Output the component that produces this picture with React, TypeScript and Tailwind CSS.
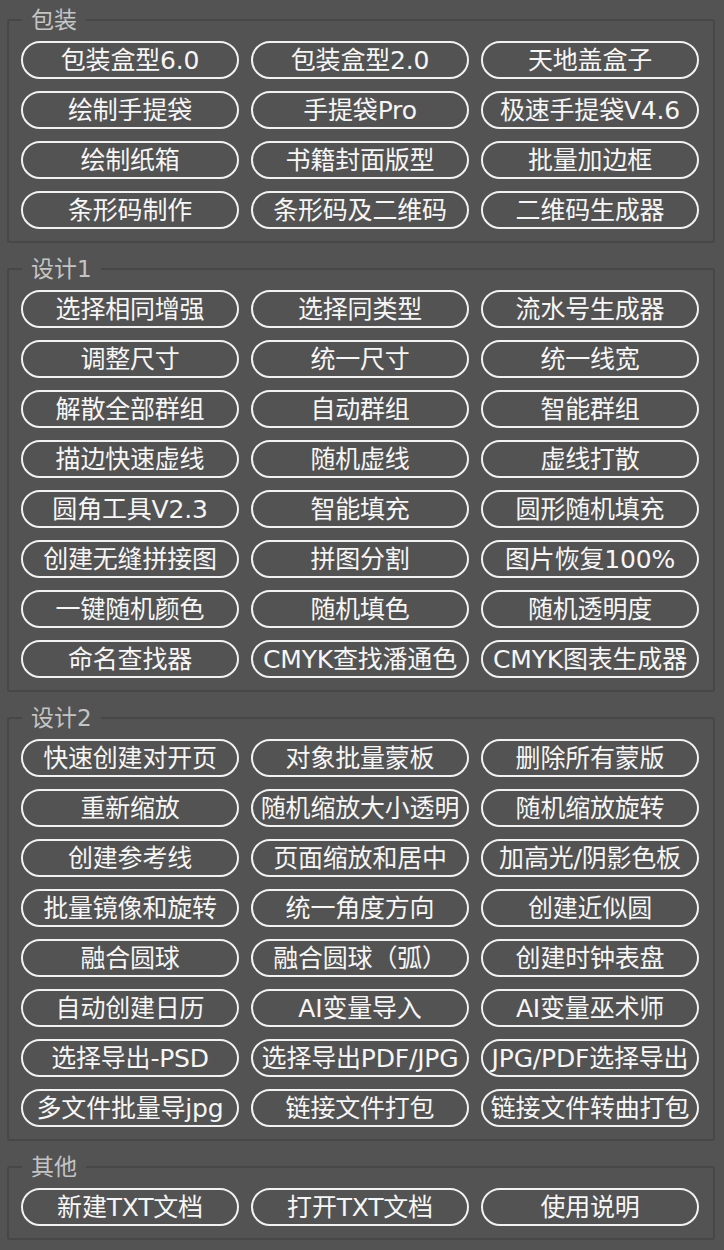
const groups: { title: string; items: string[] }[] = [
  {
    title: "包装",
    items: [
      "包装盒型6.0", "包装盒型2.0", "天地盖盒子",
      "绘制手提袋", "手提袋Pro", "极速手提袋V4.6",
      "绘制纸箱", "书籍封面版型", "批量加边框",
      "条形码制作", "条形码及二维码", "二维码生成器",
    ],
  },
  {
    title: "设计1",
    items: [
      "选择相同增强", "选择同类型", "流水号生成器",
      "调整尺寸", "统一尺寸", "统一线宽",
      "解散全部群组", "自动群组", "智能群组",
      "描边快速虚线", "随机虚线", "虚线打散",
      "圆角工具V2.3", "智能填充", "圆形随机填充",
      "创建无缝拼接图", "拼图分割", "图片恢复100%",
      "一键随机颜色", "随机填色", "随机透明度",
      "命名查找器", "CMYK查找潘通色", "CMYK图表生成器",
    ],
  },
  {
    title: "设计2",
    items: [
      "快速创建对开页", "对象批量蒙板", "删除所有蒙版",
      "重新缩放", "随机缩放大小透明", "随机缩放旋转",
      "创建参考线", "页面缩放和居中", "加高光/阴影色板",
      "批量镜像和旋转", "统一角度方向", "创建近似圆",
      "融合圆球", "融合圆球（弧）", "创建时钟表盘",
      "自动创建日历", "AI变量导入", "AI变量巫术师",
      "选择导出-PSD", "选择导出PDF/JPG", "JPG/PDF选择导出",
      "多文件批量导jpg", "链接文件打包", "链接文件转曲打包",
    ],
  },
  {
    title: "其他",
    items: ["新建TXT文档", "打开TXT文档", "使用说明"],
  },
];

function Group({ title, items }: { title: string; items: string[] }) {
  return (
    <fieldset className="ml-[7px] mr-[9px] rounded-[3px] border-2 border-[#474747] pl-[12px] pr-[14px] pt-[8px] pb-[12px] [&+fieldset]:mt-[13px]">
      <legend className="ml-[1px] px-[9px] text-[23px] leading-[26px] text-[#c4c4c4]">
        {title}
      </legend>
      <div className="grid grid-cols-3 gap-x-[12px] gap-y-[12px]">
        {items.map((t) => (
          <button
            key={t}
            className="flex h-[38px] items-center justify-center whitespace-nowrap rounded-full border-2 border-[#f2f2f2] pt-[1px] text-[25px] leading-none tracking-[-0.2px] text-[#f6f6f6]"
          >
            {t}
          </button>
        ))}
      </div>
    </fieldset>
  );
}

export default function App() {
  return (
    <main
      className="min-h-[1250px] bg-[#535353] pt-[7px]"
      style={{ fontFamily: '"DejaVu Sans", "Noto Sans CJK SC", sans-serif' }}
    >
      {groups.map((g) => (
        <Group key={g.title} title={g.title} items={g.items} />
      ))}
    </main>
  );
}
